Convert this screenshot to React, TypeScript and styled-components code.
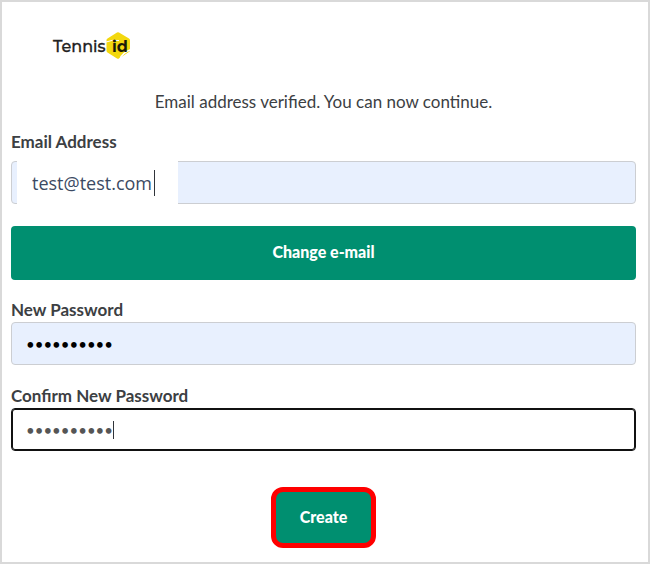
import React, { useState } from "react";
import styled, { createGlobalStyle } from "styled-components";

const GlobalStyle = createGlobalStyle`
  *, *::before, *::after { box-sizing: border-box; }
  body {
    margin: 0;
    background: #fff;
    color: #3c4043;
    font-family: Lato, "Liberation Sans", sans-serif;
    font-size: 17px;
    line-height: 24px;
  }
`;

const Page = styled.main`
  min-height: 100vh;
  padding: 28px 12px 14px 9px;
  border: 2px solid #d9d9d9;
`;

const Header = styled.header`
  display: flex;
  height: 32px;
  padding-left: 41px;
`;

const Message = styled.p`
  margin: 28px 0 16px;
  text-align: center;
`;

const Form = styled.form`
  display: flex;
  flex-direction: column;
`;

const Field = styled.div`
  display: flex;
  flex-direction: column;
  margin-bottom: 19px;
`;

const Label = styled.label<{ $gap?: number }>`
  margin-bottom: ${({ $gap = 0 }) => $gap}px;
  font-weight: 700;
  color: #3c4043;
`;

const InputShell = styled.div<{ $tone: "filled" | "focused" }>`
  position: relative;
  display: flex;
  height: 43px;
  border: 1px solid ${({ $tone }) => ($tone === "focused" ? "#111" : "#ccced2")};
  border-radius: 4px;
  box-shadow: ${({ $tone }) => ($tone === "focused" ? "inset 0 0 0 1px #111" : "none")};
  background: ${({ $tone }) => ($tone === "focused" ? "#fff" : "#e8f0fe")};
  color: ${({ $tone }) => ($tone === "focused" ? "#555" : "#000")};
`;

const TextInput = styled.input`
  flex: 1;
  min-width: 0;
  padding: 0 14px;
  border: 0;
  outline: 0;
  background: transparent;
  color: inherit;
  font: 15px Lato, "Liberation Sans", sans-serif;
`;

const EmailInput = styled(TextInput)`
  flex: 0 0 161px;
  margin: -1px 0 -1px 5px;
  padding: 0 15px;
  background: #fff;
  color: #3b4a63;
  font: 18px "Open Sans", "Noto Sans", sans-serif;
`;

const Caret = styled.span<{ $left: number; $height: number }>`
  position: absolute;
  top: 50%;
  left: ${({ $left }) => $left}px;
  width: 1px;
  height: ${({ $height }) => $height}px;
  margin-top: ${({ $height }) => -$height / 2}px;
  background: #30343a;
`;

const Button = styled.button`
  height: 54px;
  padding: 0 24px 3px;
  border: 0;
  border-radius: 4px;
  background: #008f70;
  color: #fff;
  font: 900 16px Lato, "Liberation Sans", sans-serif;
`;

const ChangeButton = styled(Button)`
  margin: 3px 0 18px;
`;

const CreateButton = styled(Button)`
  align-self: center;
  height: 61px;
  margin-top: 17px;
  border: 5px solid #f00;
  border-radius: 12px;
`;

const LogoWord = styled.text`
  font: 500 16px Montserrat, Inter, sans-serif;
  fill: #222;
  stroke: #222;
  stroke-width: 0.3px;
`;

const LogoMark = styled.text`
  font: 700 16px Montserrat, Inter, sans-serif;
  fill: #1b1a08;
`;

function Logo() {
  return (
    <svg width="82" height="32" viewBox="0 0 82 32" role="img" aria-label="Tennis id">
      <path d="M65 2.5Q66 2 67 2.500L77 8.500Q78 9.200 78 10.500V20Q78 21.500 77 22L67 28.500Q66 29 65 28.500L55.500 22.500Q54.500 22 54.500 20.500V10Q54.500 9 55.500 8.500Z" fill="#f3d80e" />
      <path d="M54 12Q60 9.500 67 10.500" fill="none" stroke="#fff" strokeWidth="1" />
      <path d="M68 29Q70 23 79 19.500" fill="none" stroke="#fff" strokeWidth="1.6" />
      <path d="M73 27Q75 23.500 80 22" fill="none" stroke="#fff" strokeWidth="1.6" />
      <LogoWord x="1" y="22">Tennis</LogoWord>
      <LogoMark x="60" y="22">id</LogoMark>
    </svg>
  );
}

export default function App() {
  const [email, setEmail] = useState("test@test.com");
  const [password, setPassword] = useState("password12");
  const [confirmation, setConfirmation] = useState("password12");

  return (
    <>
      <GlobalStyle />
      <Page>
        <Header><Logo /></Header>
        <Message>Email address verified. You can now continue.</Message>
        <Form onSubmit={(e) => e.preventDefault()}>
          <Field>
            <Label htmlFor="email" $gap={7}>Email Address</Label>
            <InputShell $tone="filled">
              <EmailInput id="email" type="email" value={email} onChange={(e) => setEmail(e.target.value)} />
              <Caret $left={142} $height={26} />
            </InputShell>
          </Field>
          <ChangeButton type="button">Change e-mail</ChangeButton>
          <Field>
            <Label htmlFor="password">New Password</Label>
            <InputShell $tone="filled">
              <TextInput id="password" type="password" value={password} onChange={(e) => setPassword(e.target.value)} />
            </InputShell>
          </Field>
          <Field>
            <Label htmlFor="confirmation">Confirm New Password</Label>
            <InputShell $tone="focused">
              <TextInput id="confirmation" type="password" value={confirmation} onChange={(e) => setConfirmation(e.target.value)} />
              <Caret $left={101} $height={18} />
            </InputShell>
          </Field>
          <CreateButton type="submit">Create</CreateButton>
        </Form>
      </Page>
    </>
  );
}
